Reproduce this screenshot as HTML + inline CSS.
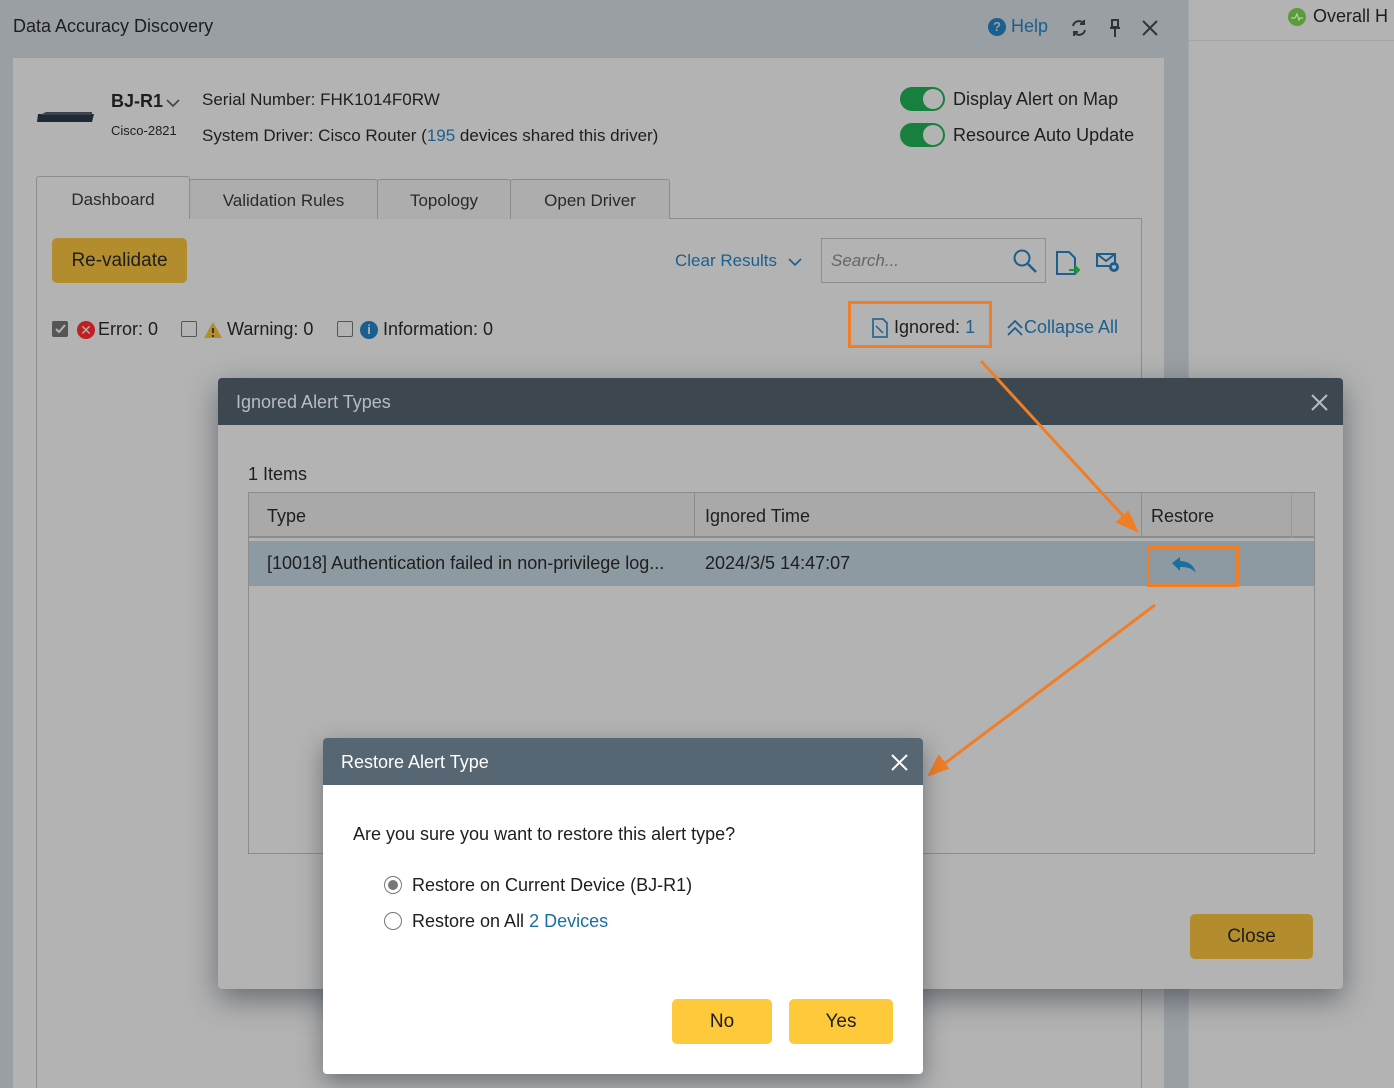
<!DOCTYPE html>
<html><head><meta charset="utf-8"><style>
*{box-sizing:border-box;margin:0;padding:0}
html{width:1394px;height:1088px;overflow:hidden}
body{width:1394px;height:1088px;position:relative;overflow:hidden;background:#9a9fa3;font-family:"Liberation Sans",sans-serif;color:#1e1e1e}
.a{position:absolute}
.t{font-size:17px;white-space:nowrap}
.blue{color:#1b5f8e}
.tab{position:absolute;top:179px;height:40px;border:1px solid #8c8c8c;border-bottom:none;background:#adadad;font-size:17px;color:#2a2a2a;text-align:center;line-height:42px;border-radius:3px 3px 0 0}
.tog{position:absolute;width:45px;height:24px;border-radius:12px;background:#17803f}
.tog:after{content:"";position:absolute;right:2px;top:2px;width:20px;height:20px;border-radius:50%;background:#b3b3b3}
.cb{position:absolute;width:16px;height:16px;border:1.5px solid #555;border-radius:2px;background:#b3b3b3}
.btn{position:absolute;border-radius:5px;text-align:center;font-size:19px}
</style></head><body>
<div class="a t" style="left:13px;top:16px;font-size:18px">Data Accuracy Discovery</div>
<div class="a" style="left:988px;top:18px;width:18px;height:18px;border-radius:50%;background:#1b5f8e;color:#9a9fa3;font-size:13px;font-weight:bold;text-align:center;line-height:18px">?</div>
<div class="a t blue" style="left:1011px;top:16px;font-size:18px">Help</div>
<svg class="a" style="left:1070px;top:18px" width="18" height="20" viewBox="0 0 18 20"><path d="M3 8a6 6 0 0 1 11-2M15 12a6 6 0 0 1-11 2M14 2v4h-4M4 18v-4h4" fill="none" stroke="#333" stroke-width="2"/></svg>
<svg class="a" style="left:1108px;top:18px" width="14" height="20" viewBox="0 0 14 20"><path d="M3 2h8M4 2v7h6V2M2 10h10M7 10v9" fill="none" stroke="#333" stroke-width="2"/></svg>
<svg class="a" style="left:1141px;top:19px" width="18" height="18"><path d="M2 2l14 14M16 2L2 16" stroke="#333" stroke-width="2"/></svg>
<div class="a" style="left:1188px;top:0;width:206px;height:1088px;background:#b3b3b3;border-left:1px solid #a6a6a6"></div>
<div class="a" style="left:1188px;top:40px;width:206px;height:1px;background:#a3a3a3"></div>
<svg class="a" style="left:1288px;top:8px" width="18" height="18"><circle cx="9" cy="9" r="9" fill="#5c9a3a"/><path d="M3 10h4l2-4 2 6 1-2h3" fill="none" stroke="#b3d3a0" stroke-width="1.2"/></svg>
<div class="a t" style="left:1313px;top:6px;font-size:18px">Overall H</div>
<div class="a" style="left:13px;top:58px;width:1151px;height:1030px;background:#b3b3b3"></div>
<svg class="a" style="left:36px;top:108px" width="60" height="16"><path d="M2 6h56l-2 8H1z" fill="#1f2a35"/><path d="M10 4h46v3H4z" fill="#3a4550"/></svg>
<div class="a t" style="left:111px;top:91px;font-weight:bold;font-size:18px">BJ-R1</div>
<svg class="a" style="left:166px;top:98px" width="14" height="10"><path d="M1 2l6 6 6-6" fill="none" stroke="#444" stroke-width="1.6"/></svg>
<div class="a t" style="left:111px;top:123px;font-size:13px">Cisco-2821</div>
<div class="a t" style="left:202px;top:90px">Serial Number: FHK1014F0RW</div>
<div class="a t" style="left:202px;top:126px">System Driver: Cisco Router (<span class="blue">195</span> devices shared this driver)</div>
<div class="tog" style="left:900px;top:87px"></div>
<div class="a t" style="left:953px;top:89px;font-size:18px">Display Alert on Map</div>
<div class="tog" style="left:900px;top:123px"></div>
<div class="a t" style="left:953px;top:125px;font-size:18px">Resource Auto Update</div>
<div class="a" style="left:36px;top:218px;width:1106px;height:870px;border:1px solid #8c8c8c;border-bottom:none;background:#b3b3b3"></div>
<div class="tab" style="left:36px;top:176px;width:154px;height:43px;background:#b3b3b3;line-height:46px;z-index:2">Dashboard</div>
<div class="tab" style="left:189px;width:189px">Validation Rules</div>
<div class="tab" style="left:377px;width:134px">Topology</div>
<div class="tab" style="left:510px;width:160px">Open Driver</div>
<div class="btn" style="left:52px;top:238px;width:135px;height:45px;background:#b38c2e;line-height:45px">Re-validate</div>
<div class="a t blue" style="left:675px;top:251px">Clear Results</div>
<svg class="a" style="left:788px;top:257px" width="14" height="10"><path d="M1 2l6 6 6-6" fill="none" stroke="#1b5f8e" stroke-width="1.6"/></svg>
<div class="a" style="left:821px;top:238px;width:225px;height:45px;border:1px solid #8c8c8c"></div>
<div class="a t" style="left:831px;top:251px;font-style:italic;color:#666">Search...</div>
<svg class="a" style="left:1012px;top:248px" width="26" height="26"><circle cx="10" cy="10" r="7.5" fill="none" stroke="#1b5f8e" stroke-width="2"/><path d="M16 16l8 8" stroke="#1b5f8e" stroke-width="2.5"/></svg>
<svg class="a" style="left:1055px;top:250px" width="28" height="28"><path d="M2 2h12l6 6v16H2z" fill="none" stroke="#1b5f8e" stroke-width="2"/><path d="M14 20h10M20 16l4 4-4 4" fill="none" stroke="#1a9a2a" stroke-width="2"/></svg>
<svg class="a" style="left:1095px;top:250px" width="28" height="26"><path d="M2 4h18v12H2zM2 4l9 7 9-7" fill="none" stroke="#1b5f8e" stroke-width="2"/><circle cx="19" cy="17" r="5" fill="#1b5f8e"/><circle cx="19" cy="17" r="2" fill="#b3b3b3"/></svg>
<div class="cb" style="left:52px;top:321px;background:#555"></div>
<svg class="a" style="left:54px;top:323px" width="12" height="12"><path d="M2 6l3 3 6-7" fill="none" stroke="#b3b3b3" stroke-width="2"/></svg>
<div class="a" style="left:77px;top:321px;width:18px;height:18px;border-radius:50%;background:#c02020;color:#b3b3b3;font-size:14px;text-align:center;line-height:18px">✕</div>
<div class="a t" style="left:98px;top:319px;font-size:18px">Error: 0</div>
<div class="cb" style="left:181px;top:321px"></div>
<svg class="a" style="left:203px;top:321px" width="20" height="18"><path d="M10 1L19 17H1z" fill="#b38c2e"/><path d="M10 7v5M10 14v2" stroke="#222" stroke-width="1.6"/></svg>
<div class="a t" style="left:227px;top:319px;font-size:18px">Warning: 0</div>
<div class="cb" style="left:337px;top:321px"></div>
<div class="a" style="left:360px;top:321px;width:18px;height:18px;border-radius:50%;background:#1b5f8e;color:#b3b3b3;font-size:13px;font-weight:bold;text-align:center;line-height:18px">i</div>
<div class="a t" style="left:383px;top:319px;font-size:18px">Information: 0</div>
<div class="a" style="left:848px;top:301px;width:144px;height:47px;border:3px solid #f07e26"></div>
<svg class="a" style="left:872px;top:318px" width="16" height="20"><path d="M1 1h10l4 4v14H1z" fill="none" stroke="#1b5f8e" stroke-width="1.6"/><path d="M4 8l7 7" stroke="#1b5f8e" stroke-width="1.4"/></svg>
<div class="a t" style="left:894px;top:317px;font-size:18px">Ignored: <span class="blue">1</span></div>
<svg class="a" style="left:1006px;top:318px" width="18" height="20"><path d="M2 10l7-7 7 7M2 17l7-7 7 7" fill="none" stroke="#1b5f8e" stroke-width="1.8"/></svg>
<div class="a t blue" style="left:1024px;top:317px;font-size:18px">Collapse All</div>

<div class="a" style="left:218px;top:378px;width:1125px;height:611px;background:#b3b3b3;border-radius:4px;box-shadow:0 10px 30px rgba(40,50,60,.55)"></div>
<div class="a" style="left:218px;top:378px;width:1125px;height:47px;background:#3c4750;border-radius:4px 4px 0 0"></div>
<div class="a t" style="left:236px;top:392px;color:#b8bcbf;font-size:18px">Ignored Alert Types</div>
<svg class="a" style="left:1311px;top:394px" width="17" height="17"><path d="M1 1l15 15M16 1L1 16" stroke="#b8bcbf" stroke-width="2"/></svg>
<div class="a t" style="left:248px;top:464px;font-size:18px">1 Items</div>
<div class="a" style="left:248px;top:492px;width:1067px;height:362px;border:1px solid #8c8c8c"></div>
<div class="a" style="left:249px;top:493px;width:1065px;height:45px;background:#a9a9a9;border-bottom:2px solid #8c8c8c"></div>
<div class="a" style="left:694px;top:493px;width:1px;height:45px;background:#8c8c8c"></div>
<div class="a" style="left:1141px;top:493px;width:1px;height:45px;background:#8c8c8c"></div>
<div class="a" style="left:1291px;top:493px;width:1px;height:45px;background:#9a9a9a"></div>
<div class="a t" style="left:267px;top:506px;font-size:18px">Type</div>
<div class="a t" style="left:705px;top:506px;font-size:18px">Ignored Time</div>
<div class="a t" style="left:1151px;top:506px;font-size:18px">Restore</div>
<div class="a" style="left:249px;top:541px;width:1065px;height:45px;background:#8d9aa1"></div>
<div class="a t" style="left:267px;top:553px;font-size:18px">[10018] Authentication failed in non-privilege log...</div>
<div class="a t" style="left:705px;top:553px;font-size:18px">2024/3/5 14:47:07</div>
<div class="a" style="left:1147px;top:546px;width:92px;height:41px;border:3px solid #f07e26"></div>
<svg class="a" style="left:1170px;top:555px" width="28" height="20"><path d="M2 8l8-6v4c8 0 14 4 16 12-4-5-9-6-16-6v4z" fill="#1b6fa0"/></svg>
<div class="btn" style="left:1190px;top:914px;width:123px;height:45px;background:#b38c2e;line-height:45px">Close</div>

<svg class="a" style="left:0;top:0" width="1394" height="1088"><g stroke="#f07e26" stroke-width="3" fill="#f07e26"><path d="M981 361L1125 518" fill="none"/><path d="M1136 530l-18-8 10-9z"/><path d="M1155 605L944 764" fill="none"/><path d="M930 774l9-17 8 11z"/></g></svg>

<div class="a" style="left:323px;top:738px;width:600px;height:336px;background:#fff;border-radius:4px;box-shadow:0 8px 24px rgba(40,50,60,.5)"></div>
<div class="a" style="left:323px;top:738px;width:600px;height:47px;background:#566773;border-radius:4px 4px 0 0"></div>
<div class="a t" style="left:341px;top:752px;color:#fff;font-size:18px">Restore Alert Type</div>
<svg class="a" style="left:891px;top:754px" width="17" height="17"><path d="M1 1l15 15M16 1L1 16" stroke="#fff" stroke-width="2"/></svg>
<div class="a t" style="left:353px;top:824px;font-size:18px">Are you sure you want to restore this alert type?</div>
<div class="a" style="left:384px;top:876px;width:18px;height:18px;border-radius:50%;border:1.5px solid #777"></div>
<div class="a" style="left:388px;top:880px;width:10px;height:10px;border-radius:50%;background:#777"></div>
<div class="a t" style="left:412px;top:875px;font-size:18px">Restore on Current Device (BJ-R1)</div>
<div class="a" style="left:384px;top:912px;width:18px;height:18px;border-radius:50%;border:1.5px solid #777"></div>
<div class="a t" style="left:412px;top:911px;font-size:18px">Restore on All <span style="color:#1b6fa0">2 Devices</span></div>
<div class="btn" style="left:672px;top:999px;width:100px;height:45px;background:#ffc93c;line-height:45px">No</div>
<div class="btn" style="left:789px;top:999px;width:104px;height:45px;background:#ffc93c;line-height:45px">Yes</div>
</body></html>
